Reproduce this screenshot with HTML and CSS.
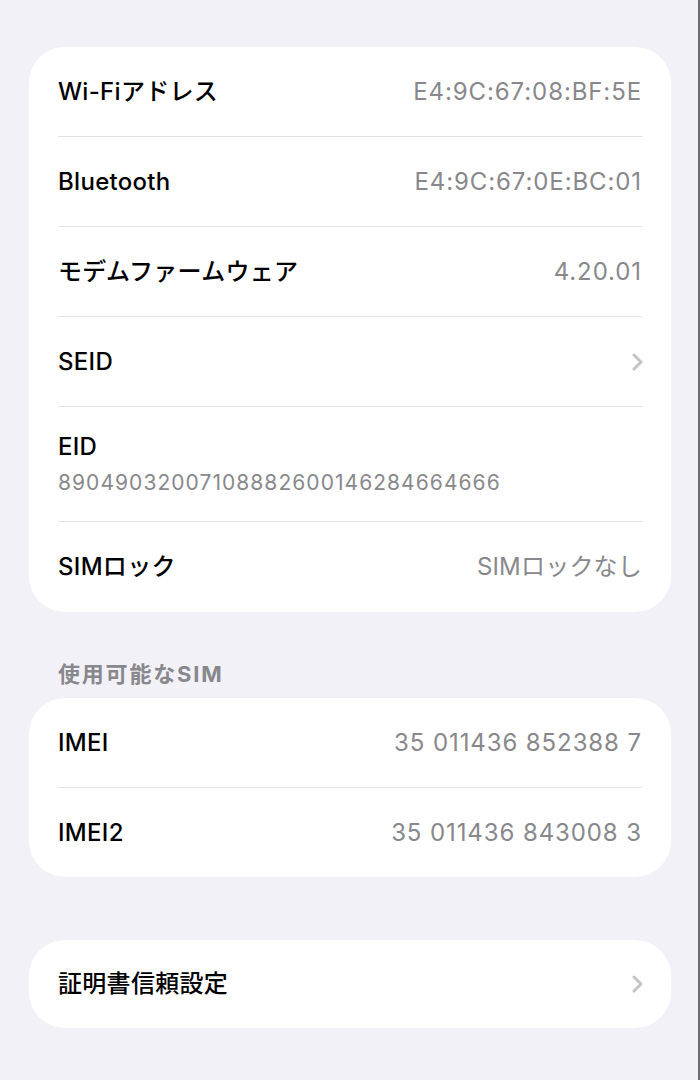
FILE: index.html
```html
<!DOCTYPE html>
<html lang="ja">
<head>
    <meta charset="UTF-8">
    <meta name="viewport" content="width=device-width, initial-scale=1.0">
    <title>情報</title>
    <link rel="stylesheet" href="styles.css">
</head>
<body>

<div class="page">
    <section class="card">
        <div class="row">
            <span class="label">Wi-Fiアドレス</span>
            <span class="value">E4:9C:67:08:BF:5E</span>
        </div>
        <div class="row">
            <span class="label">Bluetooth</span>
            <span class="value">E4:9C:67:0E:BC:01</span>
        </div>
        <div class="row">
            <span class="label">モデムファームウェア</span>
            <span class="value">4.20.01</span>
        </div>
        <div class="row">
            <span class="label">SEID</span>
            <svg class="chevron" width="12" height="20" viewBox="0 0 12 20">
                <path d="M3 3l7 7-7 7" />
            </svg>
        </div>
        <div class="row row-stack">
            <span class="label">EID</span>
            <span class="sub">89049032007108882600146284664666</span>
        </div>
        <div class="row row-last row-tall">
            <span class="label">SIMロック</span>
            <span class="value value-ja">SIMロックなし</span>
        </div>
    </section>

    <h3 class="section-title">使用可能なSIM</h3>

    <section class="card">
        <div class="row">
            <span class="label">IMEI</span>
            <span class="value">35 011436 852388 7</span>
        </div>
        <div class="row row-last">
            <span class="label">IMEI2</span>
            <span class="value">35 011436 843008 3</span>
        </div>
    </section>

    <section class="card card-single">
        <div class="row row-last row-short">
            <span class="label">証明書信頼設定</span>
            <svg class="chevron" width="12" height="20" viewBox="0 0 12 20">
                <path d="M3 3l7 7-7 7" />
            </svg>
        </div>
    </section>
</div>

</body>
</html>
```

FILE: styles.css
```css
body {
    margin: 0;
    padding: 0;
    background-color: #f2f1f7;
    font-family: Inter, "Noto Sans CJK JP", sans-serif;
    color: #000;
}
.page {
    box-sizing: border-box;
    min-height: 1080px;
    padding: 47px 27px 0 29px;
    border-right: 2px solid #6e6e70;
}
.card {
    background-color: #fff;
    border-radius: 36px;
    padding: 0 29px;
}
.card-single {
    margin-top: 63px;
}
.row {
    display: flex;
    justify-content: space-between;
    align-items: center;
    min-height: 89px;
    border-bottom: 1px solid #e2e2e5;
}
.row-last {
    border-bottom: none;
}
.row-tall {
    min-height: 90px;
}
.row-short {
    min-height: 88px;
}
.row-stack {
    flex-direction: column;
    align-items: flex-start;
    justify-content: center;
    min-height: 114px;
    gap: 8px;
}
.label {
    font-size: 24px;
    font-weight: 500;
    line-height: 30px;
    letter-spacing: 0.3px;
}
.value {
    font-size: 24px;
    color: #88888c;
    line-height: 30px;
    letter-spacing: 0.9px;
}
.value-ja {
    letter-spacing: 0.2px;
}
.sub {
    font-size: 21px;
    color: #88888c;
    line-height: 26px;
    letter-spacing: 1.05px;
}
.chevron {
    display: block;
    margin-right: -1px;
}
.chevron path {
    fill: none;
    stroke: #c4c4c8;
    stroke-width: 3;
    stroke-linecap: round;
    stroke-linejoin: round;
}
.section-title {
    margin: 0;
    padding: 48px 29px 10px;
    font-size: 22px;
    font-weight: 700;
    color: #88888c;
    line-height: 28px;
    letter-spacing: 1.8px;
}
```
